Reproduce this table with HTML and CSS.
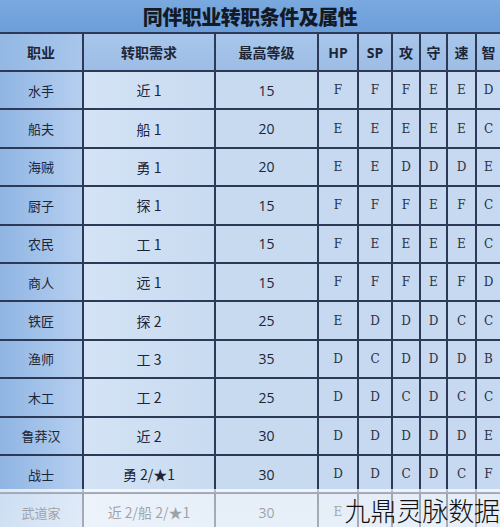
FILE: index.html
```html
<!DOCTYPE html>
<html lang="zh">
<head>
<meta charset="utf-8">
<link rel="stylesheet" href="styles.css">
</head>
<body>
<div class="page">
  <div class="title">同伴职业转职条件及属性</div>
  <div class="grid">
    <div class="hd first">职业</div><div class="hd">转职需求</div><div class="hd">最高等级</div><div class="hd lat">HP</div><div class="hd lat">SP</div><div class="hd">攻</div><div class="hd">守</div><div class="hd">速</div><div class="hd">智</div>

    <div class="c job">水手</div><div class="c req">近 1</div><div class="c lv">15</div><div class="c g">F</div><div class="c g">F</div><div class="c g">F</div><div class="c g">E</div><div class="c g">E</div><div class="c g">D</div>
    <div class="c job">船夫</div><div class="c req">船 1</div><div class="c lv">20</div><div class="c g">E</div><div class="c g">E</div><div class="c g">E</div><div class="c g">E</div><div class="c g">E</div><div class="c g">C</div>
    <div class="c job">海贼</div><div class="c req">勇 1</div><div class="c lv">20</div><div class="c g">E</div><div class="c g">E</div><div class="c g">D</div><div class="c g">D</div><div class="c g">D</div><div class="c g">E</div>
    <div class="c job">厨子</div><div class="c req">探 1</div><div class="c lv">15</div><div class="c g">F</div><div class="c g">F</div><div class="c g">F</div><div class="c g">E</div><div class="c g">F</div><div class="c g">C</div>
    <div class="c job">农民</div><div class="c req">工 1</div><div class="c lv">15</div><div class="c g">F</div><div class="c g">E</div><div class="c g">E</div><div class="c g">E</div><div class="c g">E</div><div class="c g">C</div>
    <div class="c job">商人</div><div class="c req">远 1</div><div class="c lv">15</div><div class="c g">F</div><div class="c g">F</div><div class="c g">F</div><div class="c g">E</div><div class="c g">F</div><div class="c g">D</div>
    <div class="c job">铁匠</div><div class="c req">探 2</div><div class="c lv">25</div><div class="c g">E</div><div class="c g">D</div><div class="c g">D</div><div class="c g">D</div><div class="c g">C</div><div class="c g">C</div>
    <div class="c job">渔师</div><div class="c req">工 3</div><div class="c lv">35</div><div class="c g">D</div><div class="c g">C</div><div class="c g">D</div><div class="c g">D</div><div class="c g">D</div><div class="c g">B</div>
    <div class="c job">木工</div><div class="c req">工 2</div><div class="c lv">25</div><div class="c g">D</div><div class="c g">D</div><div class="c g">C</div><div class="c g">D</div><div class="c g">C</div><div class="c g">C</div>
    <div class="c job">鲁莽汉</div><div class="c req">近 2</div><div class="c lv">30</div><div class="c g">D</div><div class="c g">D</div><div class="c g">D</div><div class="c g">D</div><div class="c g">D</div><div class="c g">E</div>
    <div class="c job">战士</div><div class="c req">勇 2/★1</div><div class="c lv">30</div><div class="c g">D</div><div class="c g">D</div><div class="c g">C</div><div class="c g">D</div><div class="c g">C</div><div class="c g">F</div>
    <div class="c job">武道家</div><div class="c req">近 2/船 2/★1</div><div class="c lv">30</div><div class="c g">E</div><div class="c g"></div><div class="c g"></div><div class="c g"></div><div class="c g"></div><div class="c g"></div>
  </div>
  <div class="fade"></div>
  <div class="mark">九鼎灵脉数据</div>
</div>
</body>
</html>
```

FILE: styles.css
```css
html, body {
  margin: 0;
  padding: 0;
  background: #ffffff;
}
.page {
  position: relative;
  width: 500px;
  height: 527px;
  overflow: hidden;
  font-family: "Noto Sans CJK SC", "Noto Sans", sans-serif;
  color: #1c2535;
}
.title {
  height: 32px;
  display: flex;
  align-items: center;
  justify-content: center;
  background: linear-gradient(180deg, #7aa9df 0%, #6d9ed9 100%);
  font-size: 20px;
  font-weight: 900;
  color: #121a28;
  letter-spacing: -0.5px;
}
.grid {
  display: grid;
  grid-template-columns: 82px 130px 101px 38px 32px 26px 25px 27px 23px;
  grid-template-rows: 36px;
  grid-auto-rows: 36.4px;
  column-gap: 2px;
  row-gap: 2px;
  padding-top: 2px;
  background: #2c3a57;
}
.hd {
  display: flex;
  align-items: center;
  justify-content: center;
  background: linear-gradient(180deg, #a9c6ea 0%, #9dbde6 100%);
  font-size: 14px;
  font-weight: 700;
  color: #1d2637;
}
.hd.lat {
  font-family: "Open Sans", "Noto Sans", sans-serif;
  font-size: 14px;
}
.hd.first {
  background: linear-gradient(90deg, #93b8e4 0%, #a9c6ea 100%);
}
.c {
  display: flex;
  align-items: center;
  justify-content: center;
  background: #c6d9f0;
  font-size: 13px;
}
.job {
  background: linear-gradient(90deg, #8fb5e3 0%, #b6cff0 100%);
}
.req {
  background: linear-gradient(90deg, #d4e3f5 0%, #c9dbf1 100%);
  font-size: 14px;
}
.lv {
  font-family: "Open Sans", "Noto Sans", sans-serif;
  font-size: 14px;
  background: #c8daf0;
}
.g {
  font-family: "DejaVu Serif", "Liberation Serif", serif;
  font-size: 12px;
  color: #2b3344;
}
.fade {
  position: absolute;
  left: 0;
  right: 0;
  top: 489px;
  bottom: 0;
  background: linear-gradient(180deg, rgba(255,255,255,0.75) 0%, rgba(255,255,255,0.55) 12%, rgba(255,255,255,0.58) 100%);
}
.mark {
  position: absolute;
  right: 0;
  top: 495px;
  font-family: "Noto Sans CJK SC", sans-serif;
  font-size: 26px;
  font-weight: 300;
  line-height: 30px;
  color: #111111;
  letter-spacing: -0.1px;
}
```
